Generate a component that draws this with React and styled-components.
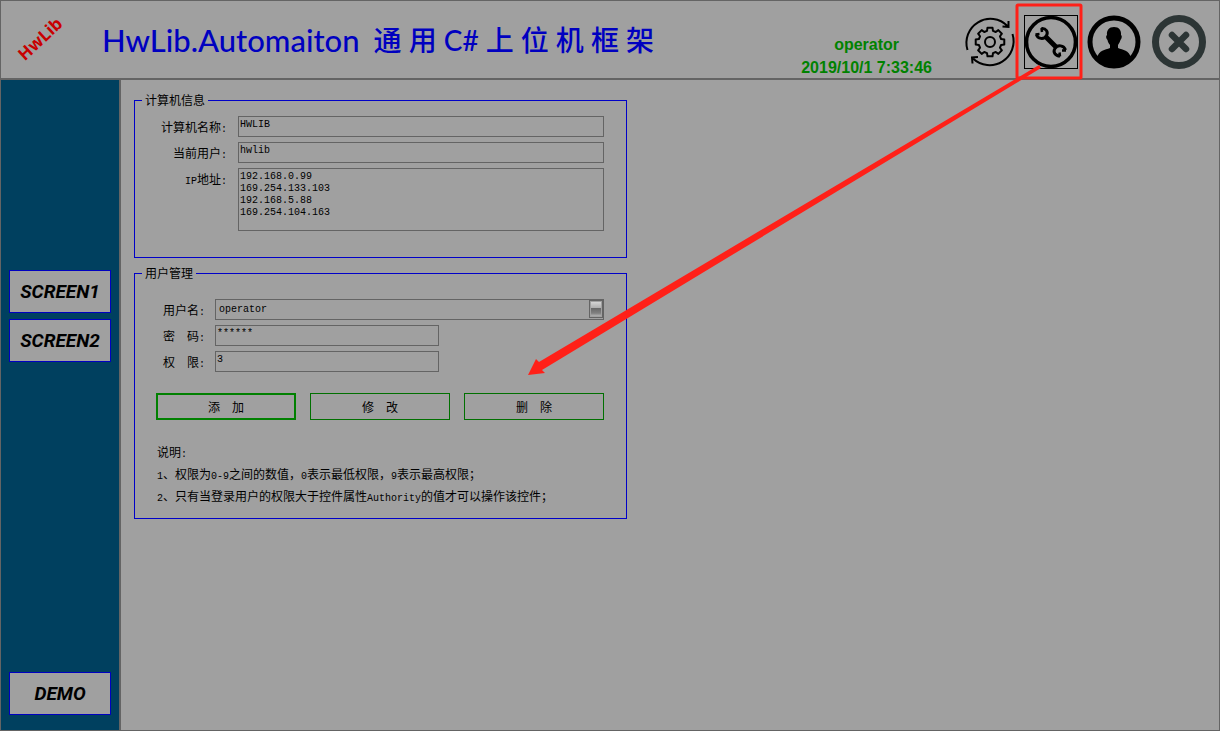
import React from "react";
import styled, { createGlobalStyle } from "styled-components";

const GlobalStyle = createGlobalStyle`
  * { box-sizing: border-box; }
  body {
    margin: 0;
    background: #a0a0a0;
    color: #000;
    font: 12px/14px "Noto Sans CJK SC", sans-serif;
  }
  button, input, select, textarea { font: inherit; color: inherit; margin: 0; border-radius: 0; }
`;

const Window = styled.div`
  position: relative;
  min-height: 100vh;
  display: grid;
  grid-template-rows: 80px 1fr;
  border: 1px solid #646464;
  border-top: 0;
  overflow: hidden;
`;

const Header = styled.header`
  display: flex;
  align-items: center;
  padding: 0 13px;
  border-top: 1px solid #646464;
  border-bottom: 2px solid #646464;
`;

const Logo = styled.div`
  width: 50px;
  text-align: center;
  font: bold 17px/24px "Open Sans", sans-serif;
  color: #c80000;
  transform: rotate(-43deg);
`;

const Title = styled.h1`
  display: flex;
  gap: 14px;
  margin: 0 0 0 38px;
  font: 500 31px/40px Lato, "Noto Sans CJK SC", sans-serif;
  color: #0000c0;
  white-space: nowrap;
`;

const TitleChinese = styled.span`
  font-size: 28px;
`;

const Status = styled.div`
  margin-left: auto;
  padding-top: 32px;
  text-align: center;
  font: bold 16px/23px "Liberation Sans", Arial, sans-serif;
  color: #008200;
  white-space: nowrap;
`;

const Toolbar = styled.div`
  display: flex;
  gap: 10px;
  margin-left: 28px;
  padding-top: 4px;
`;

const IconButton = styled.button`
  width: 54px;
  height: 54px;
  padding: 0;
  background: none;
  border: ${(p) => (p.$focused ? "1px solid #000" : "0")};
  svg { display: block; width: 100%; height: 100%; overflow: visible; }
`;

const Body = styled.div`
  display: grid;
  grid-template-columns: 120px 1fr;
`;

const Sidebar = styled.nav`
  display: flex;
  flex-direction: column;
  gap: 6px;
  padding: 190px 8px 15px;
  background: #00405f;
  border-right: 2px solid #646464;
`;

const ScreenButton = styled.button`
  height: 43px;
  padding: 0;
  margin-top: ${(p) => (p.$last ? "auto" : "0")};
  border: 1px solid #0000c0;
  background: #a0a0a0;
  font: italic bold 19px/24px Roboto, sans-serif;
`;

const Main = styled.main`
  display: flex;
  flex-direction: column;
  gap: 8px;
  padding: 13px;
`;

const Group = styled.fieldset`
  width: 100%;
  max-width: 493px;
  min-width: 0;
  margin: 0;
  padding: ${(p) => p.$padding};
  border: 1px solid #0000c8;
`;

const Legend = styled.legend`
  padding: 0 3px;
  line-height: 14px;
`;

const Fields = styled.div`
  display: grid;
  grid-template-columns: ${(p) => p.$columns};
  gap: 5px ${(p) => p.$gap};
  align-items: start;
  padding: ${(p) => p.$padding};
`;

const Label = styled.label`
  line-height: 21px;
  text-align: ${(p) => p.$align || "left"};
`;

const Latin = styled.span`
  font-family: "Liberation Mono", monospace;
  font-size: 10px;
  line-height: 10px;
`;

const TextBox = styled.input`
  width: ${(p) => p.$width || "100%"};
  height: 21px;
  padding: 0 1px 4px;
  border: 1px solid #646464;
  background: transparent;
  && { font: 10px/12px "Liberation Mono", monospace; }
`;

const TextArea = styled.textarea`
  width: 100%;
  height: 63px;
  padding: 2px 1px;
  border: 1px solid #646464;
  background: transparent;
  resize: none;
  overflow: hidden;
  display: block;
  && { font: 10px/12px "Liberation Mono", monospace; }
`;

const Combo = styled.div`
  position: relative;
`;

const Select = styled.select`
  display: block;
  width: 100%;
  height: 21px;
  padding: 0 3px;
  border: 1px solid #646464;
  background: transparent;
  appearance: none;
  && { font: 10px/12px "Liberation Mono", monospace; }
`;

const ComboArrow = styled.span`
  position: absolute;
  top: 1px;
  right: 1px;
  width: 14px;
  height: 18px;
  border: 1px solid #646464;
  pointer-events: none;
  &::after {
    content: "";
    display: block;
    height: 14px;
    margin: 1px;
    background: linear-gradient(#d4d4d4, #b0b0b0 40%, #686868 45%, #808080 80%, #b0b0b0);
  }
`;

const Actions = styled.div`
  display: grid;
  grid-template-columns: repeat(3, 1fr);
  gap: 14px;
  padding: 21px 15px 0 14px;
`;

const ActionButton = styled.button`
  height: 27px;
  padding: 0;
  border: ${(p) => (p.$primary ? "2px solid #008000" : "1px solid #007000")};
  background: transparent;
`;

const Notes = styled.div`
  padding: 21px 0 0 15px;
  line-height: 22px;
  white-space: nowrap;
  p { margin: 0; }
`;

const Annotation = styled.svg`
  position: absolute;
  top: 0;
  right: -1px;
  width: 710px;
  height: 400px;
  pointer-events: none;
`;

const gearOutline = (() => {
  const points = [];
  for (let i = 0; i < 8; i += 1) {
    [[-15, 11.5], [-10, 14.5], [10, 14.5], [15, 11.5]].forEach(([offset, radius]) => {
      const angle = ((i * 45 + offset) * Math.PI) / 180;
      points.push(`${(30 + radius * Math.sin(angle)).toFixed(2)},${(27 - radius * Math.cos(angle)).toFixed(2)}`);
    });
  }
  return points.join(" ");
})();

const GearIcon = () => (
  <svg viewBox="0 0 54 54" fill="none" stroke="#000" strokeWidth="2" aria-hidden="true">
    <polygon points={gearOutline} strokeLinejoin="round" />
    <circle cx="30" cy="27" r="5" />
    <path d="M7.500 35A24 24 0 0 1 47.500 11M42.500 11.500L48.500 12V6" />
    <path d="M52.500 19A24 24 0 0 1 13 43.500M18 42L12 42.500L12.500 48.500" />
  </svg>
);

const WrenchIcon = () => (
  <svg viewBox="1 1 52 52" fill="none" stroke="#000" aria-hidden="true">
    <circle cx="27" cy="27" r="24.500" strokeWidth="3.600" />
    <path d="M21.500 21.500L32 32" strokeWidth="5" />
    <path d="M17.500 13.500C22 13 24.500 17 22.500 20.500C20 25 13.500 24 12.500 19.500" strokeWidth="3" />
    <path d="M17.500 13L18 17M11.500 19.500L15.500 19" strokeWidth="2.500" />
    <path d="M41.500 35C40 30 33.500 29.500 31 33.500C28.500 37 31.500 41 36 41" strokeWidth="3" />
    <path d="M42 35.500L38 35.500M36 41.500L35.500 37.500" strokeWidth="2.500" />
  </svg>
);

const UserIcon = () => (
  <svg viewBox="0 0 54 54" aria-hidden="true">
    <circle cx="26" cy="27" r="24" fill="none" stroke="#000" strokeWidth="5" />
    <path d="M26 12C31 12 33.500 15.500 33 20C34.500 21 33.500 24 32.500 25C31.500 28 30.500 29 30 30V33C35 35 41 35 43 43C38 52 14 52 9 43C11 35 17 35 22 33V30C21 28.500 20 27.500 19.500 25C18 23.500 17.500 21 19 20C18.500 15.500 21 12 26 12Z" />
  </svg>
);

const CloseIcon = () => (
  <svg viewBox="0 0 54 54" fill="none" stroke="#2c3535" aria-hidden="true">
    <circle cx="27" cy="27" r="23.500" strokeWidth="7" />
    <path d="M20 20L34 34M34 20L20 34" strokeWidth="6.500" strokeLinecap="round" />
  </svg>
);

export default function App() {
  return (
    <>
      <GlobalStyle />
      <Window>
        <Header>
          <Logo>HwLib</Logo>
          <Title>
            <span>HwLib.Automaiton</span>
            <TitleChinese>通 用 C# 上 位 机 框 架</TitleChinese>
          </Title>
          <Status>
            <div>operator</div>
            <div>2019/10/1 7:33:46</div>
          </Status>
          <Toolbar>
            <IconButton aria-label="Parameters"><GearIcon /></IconButton>
            <IconButton aria-label="Settings" $focused><WrenchIcon /></IconButton>
            <IconButton aria-label="User"><UserIcon /></IconButton>
            <IconButton aria-label="Close"><CloseIcon /></IconButton>
          </Toolbar>
        </Header>
        <Body>
          <Sidebar>
            <ScreenButton>SCREEN1</ScreenButton>
            <ScreenButton>SCREEN2</ScreenButton>
            <ScreenButton $last>DEMO</ScreenButton>
          </Sidebar>
          <Main>
            <Group $padding="0 7px 26px">
              <Legend>计算机信息</Legend>
              <Fields $columns="85px 1fr" $gap="11px" $padding="9px 15px 0 0">
                <Label htmlFor="computer" $align="right">计算机名称<Latin>:</Latin></Label>
                <TextBox id="computer" defaultValue="HWLIB" />
                <Label htmlFor="current" $align="right">当前用户<Latin>:</Latin></Label>
                <TextBox id="current" defaultValue="hwlib" />
                <Label htmlFor="address" $align="right"><Latin>IP</Latin>地址<Latin>:</Latin></Label>
                <TextArea
                  id="address"
                  defaultValue={"192.168.0.99\n169.254.133.103\n192.168.5.88\n169.254.104.163"}
                />
              </Fields>
            </Group>
            <Group $padding="0 7px 11px">
              <Legend>用户管理</Legend>
              <Fields $columns="52px 1fr" $gap="0px" $padding="19px 15px 0 21px">
                <Label htmlFor="user">用户名<Latin>:</Latin></Label>
                <Combo>
                  <Select id="user" defaultValue="operator">
                    <option>operator</option>
                  </Select>
                  <ComboArrow />
                </Combo>
                <Label htmlFor="password">密　码<Latin>:</Latin></Label>
                <TextBox id="password" $width="224px" defaultValue="******" />
                <Label htmlFor="authority">权　限<Latin>:</Latin></Label>
                <TextBox id="authority" $width="224px" defaultValue="3" />
              </Fields>
              <Actions>
                <ActionButton $primary>添　加</ActionButton>
                <ActionButton>修　改</ActionButton>
                <ActionButton>删　除</ActionButton>
              </Actions>
              <Notes>
                <p>说明<Latin>:</Latin></p>
                <p>
                  <Latin>1</Latin>、权限为<Latin>0-9</Latin>之间的数值，<Latin>0</Latin>表示最低权限，<Latin>9</Latin>表示最高权限；
                </p>
                <p>
                  <Latin>2</Latin>、只有当登录用户的权限大于控件属性<Latin>Authority</Latin>的值才可以操作该控件；
                </p>
              </Notes>
            </Group>
          </Main>
        </Body>
        <Annotation viewBox="510 0 710 400" aria-hidden="true">
          <rect x="1017" y="5" width="64" height="73" rx="1" fill="none" stroke="#ff2018" strokeWidth="3" />
          <path d="M1039 65L539 362L536 359L528 375L545 373L542 370L1041 68Z" fill="#ff2018" />
        </Annotation>
      </Window>
    </>
  );
}
